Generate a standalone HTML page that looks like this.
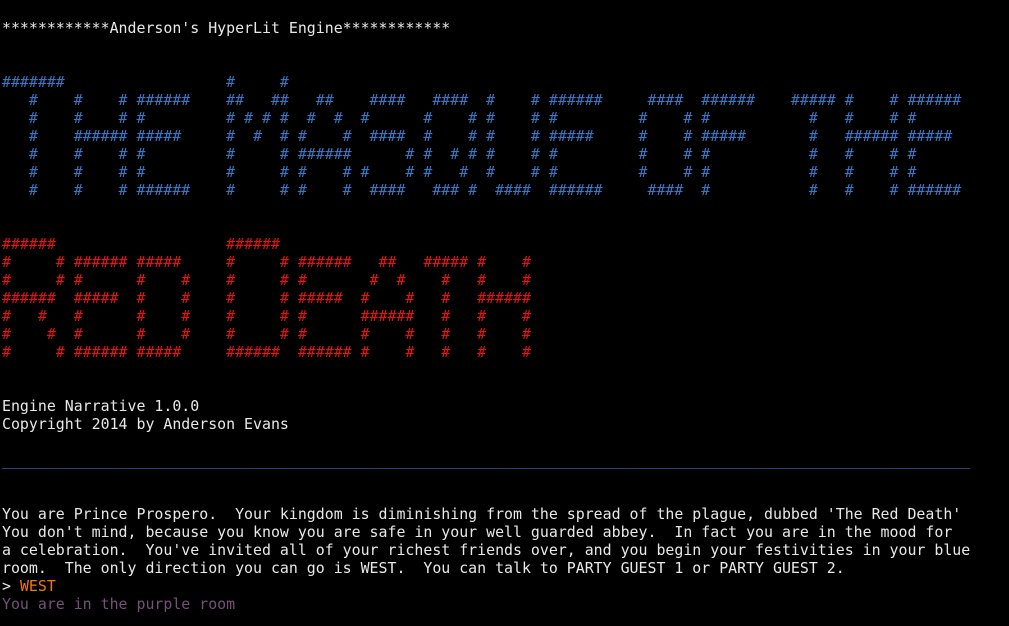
<!DOCTYPE html>
<html><head><meta charset="utf-8"><style>
html,body{margin:0;padding:0;background:#000;width:1009px;height:626px;overflow:hidden}
pre{margin:0;position:absolute;left:2px;top:19px;font-family:"DejaVu Sans Mono","Liberation Mono",monospace;font-size:14.9px;line-height:18px;color:#e8e8e8;white-space:pre}
.b{color:#3b76c4}.r{color:#e31414}.o{color:#f57900}.p{color:#75507b}
</style></head><body><pre>************Anderson's HyperLit Engine************


<span class="b">#######                  #     #
   #    #    # ######    ##   ##   ##    ####   ####  #    # ######     ####  ######    ##### #    # ######
   #    #    # #         # # # #  #  #  #      #    # #    # #         #    # #           #   #    # #
   #    ###### #####     #  #  # #    #  ####  #    # #    # #####     #    # #####       #   ###### #####
   #    #    # #         #     # ######      # #  # # #    # #         #    # #           #   #    # #
   #    #    # #         #     # #    # #    # #   #  #    # #         #    # #           #   #    # #
   #    #    # ######    #     # #    #  ####   ### #  ####  ######     ####  #           #   #    # ######</span>


<span class="r">######                   ######
#     # ###### #####     #     # ######   ##   ##### #    #
#     # #      #    #    #     # #       #  #    #   #    #
######  #####  #    #    #     # #####  #    #   #   ######
#   #   #      #    #    #     # #      ######   #   #    #
#    #  #      #    #    #     # #      #    #   #   #    #
#     # ###### #####     ######  ###### #    #   #   #    #</span>


Engine Narrative 1.0.0
Copyright 2014 by Anderson Evans

<span class="b">____________________________________________________________________________________________________________</span>


You are Prince Prospero.  Your kingdom is diminishing from the spread of the plague, dubbed 'The Red Death'
You don't mind, because you know you are safe in your well guarded abbey.  In fact you are in the mood for
a celebration.  You've invited all of your richest friends over, and you begin your festivities in your blue
room.  The only direction you can go is WEST.  You can talk to PARTY GUEST 1 or PARTY GUEST 2.
&gt; <span class="o">WEST</span>
<span class="p">You are in the purple room</span></pre></body></html>
